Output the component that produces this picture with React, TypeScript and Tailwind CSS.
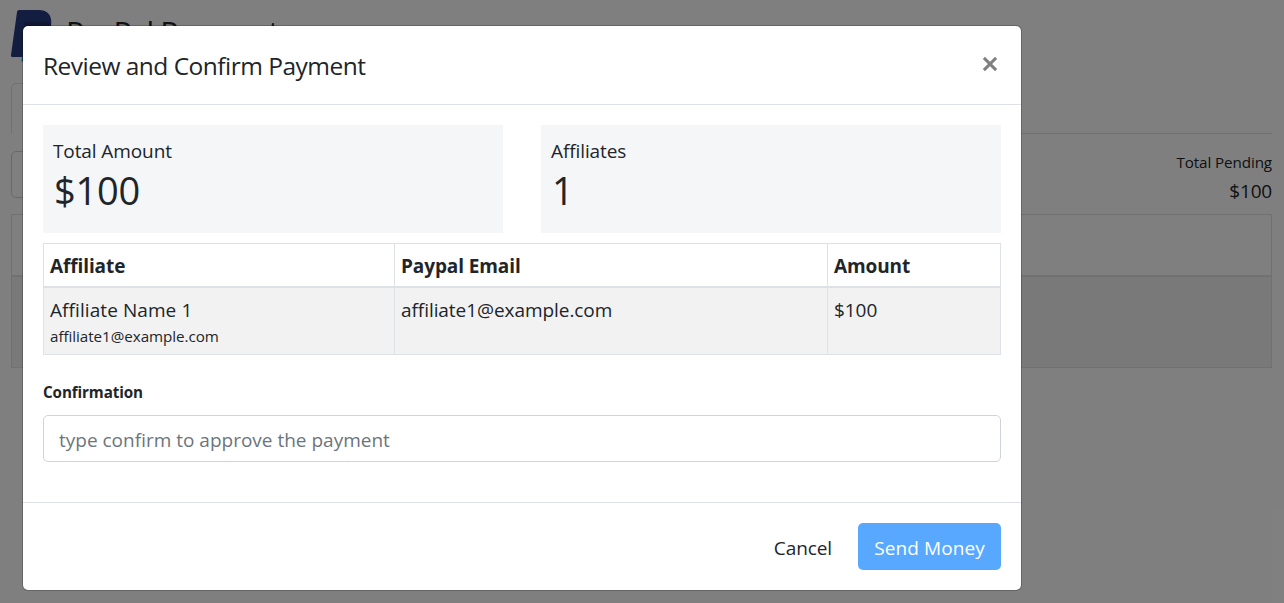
import type { ReactNode } from "react";

const payouts = [
  { name: "Affiliate Name 1", email: "affiliate1@example.com", amount: "$100" },
];

function PayPalMark() {
  return (
    <svg width="44" height="54" viewBox="0 0 44 54" className="shrink-0">
      <path
        d="M14 16h26c4 5 4 12 1 19-3 6-9 8-15 8h-3l-2 8.500H10.500z"
        fill="#179bd7"
      />
      <path
        d="M8 0h20c6 0 11 3 12 9 2 13-6 21-19 21h-5l-3 17H1.500c-1.200 0-1.700-.7-1.500-2L6 2C6.200.700 7 0 8 0z"
        fill="#253b80"
      />
      <path d="M13 15c.3-2 1-3 3-3h16c3 0 6 .5 8 2-1 10-9 16-19 16h-5l-5 8z" fill="#222d65" />
    </svg>
  );
}

function Dashboard() {
  return (
    <div className="flex h-[603px] flex-col px-[11px] pr-3">
      <div className="flex h-[83px] gap-[11px] pt-[10px]">
        <PayPalMark />
        <h1 className="pt-0.5 text-[30.500px] leading-[40px] font-medium tracking-[-1.05px]">PayPal Payment</h1>
      </div>
      <div className="flex h-[51px] border-b border-[#dee2e6]">
        <div className="h-[51px] w-40 rounded-t-[5px] border border-b-white border-[#dee2e6]" />
      </div>
      <div className="mt-[17px] flex h-[47px] justify-between">
        <div className="w-60 rounded-[5px] border border-[#ced4da]" />
        <div className="-mt-px flex flex-col items-end">
          <span className="text-[15.200px] leading-6 tracking-[-0.1px]">Total Pending</span>
          <span className="mt-0.5 text-[19px] leading-[30px] tracking-[-0.2px]">$100</span>
        </div>
      </div>
      <div className="mt-4 h-[154px] border border-[#dee2e6]">
        <div className="h-[62px] border-b-2 border-[#dee2e6]" />
        <div className="h-[90px] bg-[#f2f2f2]" />
      </div>
    </div>
  );
}

function Stat({ label, value }: { label: string; value: string }) {
  return (
    <div className="h-[108px] w-[460px] bg-[#f4f6f8] px-2.5 pt-[11px]">
      <div className="text-[19px] leading-[30px] tracking-[-0.1px]">{label}</div>
      <div className="pl-px text-[38px] leading-[48px] tracking-[-0.2px]">{value}</div>
    </div>
  );
}

function Head({ children }: { children: ReactNode }) {
  return (
    <th className="border border-b-2 border-[#dee2e6] px-1.5 pt-[7px] pb-[5px] text-left text-[19px] leading-[30px] font-bold tracking-[-0.1px]">
      {children}
    </th>
  );
}

function Cell({ children }: { children: ReactNode }) {
  return <td className="border border-[#dee2e6] px-1.5 pt-[7px] pb-[6px] align-top">{children}</td>;
}

function ConfirmDialog() {
  return (
    <div
      role="dialog"
      className="ml-[22px] mt-[25px] flex h-[566px] w-[1000px] flex-col rounded-[6px] border border-black/20 bg-white bg-clip-padding"
    >
      <header className="flex h-[79px] shrink-0 justify-between border-b border-[#dee2e6] pt-5 pr-[22px] pl-5">
        <h2 className="text-[24.500px] leading-[40px] tracking-[-0.52px]">Review and Confirm Payment</h2>
        <button aria-label="Close" className="mt-[10px] h-4 w-[17px]">
          <svg width="16" height="16" viewBox="0 0 16 16">
            <path d="M1.900 1.900L14.100 14.100M14.100 1.900L1.900 14.100" stroke="#808080" strokeWidth="3" />
          </svg>
        </button>
      </header>
      <div className="h-[397px] px-5 pt-5">
        <div className="flex justify-between">
          <Stat label="Total Amount" value="$100" />
          <Stat label="Affiliates" value="1" />
        </div>
        <table className="mt-2.5 h-[112px] w-[958px] table-fixed border-collapse border border-[#dee2e6]">
          <colgroup>
            <col className="w-[351px]" />
            <col className="w-[433px]" />
            <col />
          </colgroup>
          <thead>
            <tr className="h-[43px]">
              <Head>Affiliate</Head>
              <Head>Paypal Email</Head>
              <Head>Amount</Head>
            </tr>
          </thead>
          <tbody>
            {payouts.map((p) => (
              <tr key={p.email} className="bg-[#f2f2f2] text-[19px] leading-[30px] tracking-[-0.06px]">
                <Cell>
                  <div className="tracking-[0.08px]">{p.name}</div>
                  <div className="text-[15.200px] leading-[23px] tracking-[-0.05px]">{p.email}</div>
                </Cell>
                <Cell>{p.email}</Cell>
                <Cell>{p.amount}</Cell>
              </tr>
            ))}
          </tbody>
        </table>
        <label htmlFor="confirmation" className="mt-[25px] block text-[15.200px] leading-[25px] font-bold tracking-[-0.1px]">
          Confirmation
        </label>
        <input
          id="confirmation"
          placeholder="type confirm to approve the payment"
          className="mt-2.5 block h-[47px] w-full rounded-[5px] border border-[#ced4da] px-[15px] pt-[3px] text-[19px] tracking-[0px] placeholder:text-[#6c757d]"
        />
      </div>
      <footer className="flex h-[88px] items-start justify-end gap-[10px] border-t border-[#dee2e6] pt-5 pr-5 text-[19px]">
        <button className="h-[47px] px-4 pt-[3px] tracking-[-0.1px]">Cancel</button>
        <button className="h-[47px] w-[143px] rounded-[5px] bg-[#59a8ff] pt-[3px] tracking-[0.1px] text-white">
          Send Money
        </button>
      </footer>
    </div>
  );
}

export default function App() {
  return (
    <div className="relative h-[603px] w-[1284px] overflow-hidden bg-white font-['Open_Sans','Noto_Sans',sans-serif] text-[#212529]">
      <Dashboard />
      <div className="absolute inset-0 flex items-start bg-black/50">
        <ConfirmDialog />
      </div>
    </div>
  );
}
